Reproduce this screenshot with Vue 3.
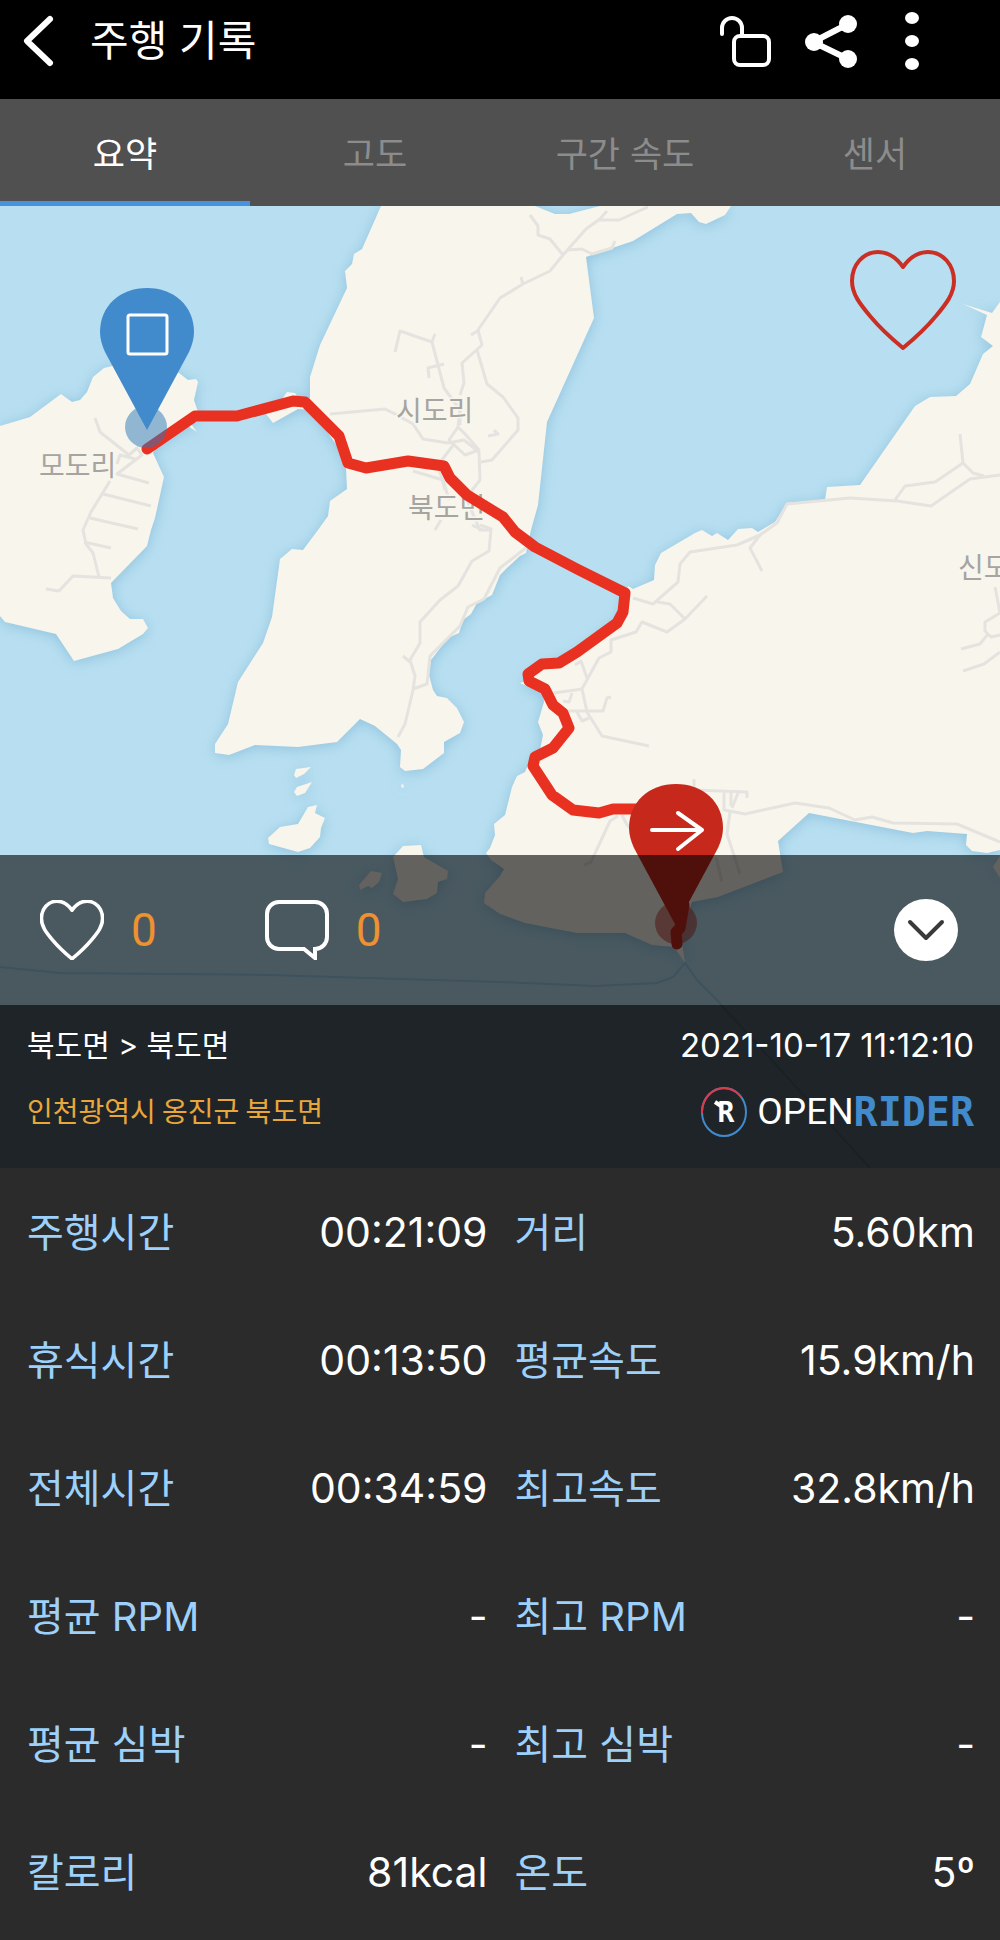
<script setup>
import { ref } from 'vue'

const tabs = ['요약', '고도', '구간 속도', '센서']
const active = ref(0)

const heart =
  'M53 17C46 7 37 2 28 2C13 2 2 15 2 31C2 44 10 54 20 66C30 78 42 89 53 98C64 89 76 78 86 66C96 54 104 44 104 31C104 15 93 2 78 2C69 2 60 7 53 17Z'

const pin =
  'M0-142C-27-142-47-124-47-98C-47-91-45-85-42-78L0 0L42-78C45-85 47-91 47-98C47-124 27-142 0-142Z'

const lands = [
  '0,426 30,417 61,394 72,402 80,400 87,392 93,377 104,368 120,364 165,364 179,373 188,380 196,379 198,382 194,400 198,412 191,424 197,432 188,426 158,444 153,453 164,477 155,518 151,530 147,546 111,583 113,598 121,611 130,619 143,619 148,628 143,634 118,649 74,661 56,634 5,622 0,616',
  '381,206 362,249 354,254 352,264 345,271 347,288 320,345 310,377 310,398 297,396 295,393 287,392 280,402 266,414 273,423 298,409 312,410 340,450 346,468 347,489 330,501 328,516 318,530 303,550 292,549 280,559 272,617 263,643 238,682 228,724 215,744 215,753 229,755 255,745 298,747 337,742 360,719 375,726 397,744 401,750 400,767 405,771 423,769 444,753 444,742 460,733 464,722 457,708 447,698 437,696 433,690 429,675 431,660 448,638 459,633 463,620 471,614 477,603 492,595 500,575 507,568 520,556 526,553 531,530 538,505 547,422 594,318 586,257 633,241 677,214 691,213 699,222 706,224 725,215 731,206 600,206 569,214 555,214 535,206',
  '1000,302 992,313 963,304 987,315 981,337 993,346 983,354 970,384 956,396 930,397 915,406 860,485 827,487 825,500 787,503 775,522 758,532 752,528 738,529 728,540 717,533 712,536 702,530 695,533 661,553 655,565 654,580 633,589 628,586 618,618 580,650 528,672 528,680 520,683 543,693 544,702 538,722 543,735 540,750 528,765 525,772 517,776 512,787 505,815 494,824 495,835 490,848 486,853 491,860 504,869 500,876 485,893 484,903 500,914 525,923 577,933 625,933 652,945 674,947 685,963 681,935 692,902 718,897 783,872 778,841 809,813 913,833 927,831 967,834 966,845 972,851 987,853 1000,850',
  '1000,856 993,867 1000,878',
  '296,769 311,767 304,774 296,778 294,775',
  '297,787 312,782 305,793 297,796 294,792',
  '308,807 317,805 315,813 325,818 321,828 320,837 310,848 298,852 269,844 268,838 280,827 298,824',
  '401,785 403,784 404,787 402,788',
  '403,846 421,845 424,857 448,871 447,879 438,882 437,893 427,899 403,902 393,894 398,879 393,857',
  '371,871 382,873 379,882 372,888 368,886 360,890 359,885'
]

const roads = [
  '95,418 100,432 129,455 137,448 142,455 117,474 149,483',
  '117,464 120,455 135,459',
  '110,481 91,512 83,530 86,544 93,553 99,577',
  '103,494 151,506',
  '90,518 138,529',
  '84,542 111,548',
  '111,578 73,576 59,591 46,589',
  '330,414 385,409 397,415 413,424 423,439 448,443 464,440 479,452 480,480 466,498 480,530 492,530',
  '460,425 460,410 444,388 432,342 400,331 395,352',
  '432,342 435,334',
  '444,364 428,368 429,378',
  '460,395 464,383 462,363 482,345 478,330 500,298 523,284 550,271 563,255 586,229 600,219 607,211',
  '471,335 479,330',
  '477,350 487,384 503,397 518,418 518,430 492,460 481,462',
  '530,215 538,226 538,235 550,239 563,255',
  '598,220 619,220 648,207',
  '568,250 582,249 592,254 612,248 615,241',
  '521,277 523,284',
  '460,410 458,427 449,440 465,455 479,450 466,435 458,427',
  '454,444 438,465 412,463',
  '413,471 443,480 449,500',
  '438,465 445,490',
  '488,436 498,434 494,430',
  '480,525 491,529 489,551 472,561 458,586 440,600 420,622 420,643 410,660 415,676 413,690 405,724 398,737',
  '403,656 410,662',
  '413,689 427,684 430,656 460,626 468,607 484,599 500,568 527,547',
  '441,520 435,530',
  '472,525 482,530',
  '633,598 653,604 678,582 680,564 690,552 737,545 760,535 777,523 787,504 850,498 897,501 931,506 970,479 1000,475',
  '895,500 905,486 935,482 963,463 973,473 984,476',
  '963,463 960,434',
  '760,535 750,548 762,571',
  '657,602 670,604 685,619 667,632 642,622 636,632 611,640 611,652 599,658 582,689 587,712 602,736 649,746',
  '707,596 685,619',
  '575,665 581,661 587,678',
  '554,693 582,689',
  '572,693 569,702 563,701',
  '565,711 603,711 607,698 611,697',
  '577,712 582,721 589,718',
  '694,779 694,790 747,792 747,798',
  '724,792 724,810 745,814 795,803 829,808 855,820 872,817 893,823 957,824 1000,842',
  '731,792 731,806',
  '738,793 732,808',
  '730,812 727,834 740,874',
  '716,857 722,882',
  '618,816 610,821 591,862 584,865',
  '622,815 627,825 633,830',
  '995,587 1000,613 985,622 985,631 991,637 1000,635',
  '988,634 980,644 961,649',
  '1000,652 984,664 963,671'
]

const stats = [
  ['주행시간', '00:21:09'],
  ['거리', '5.60km'],
  ['휴식시간', '00:13:50'],
  ['평균속도', '15.9km/h'],
  ['전체시간', '00:34:59'],
  ['최고속도', '32.8km/h'],
  ['평균 RPM', '-'],
  ['최고 RPM', '-'],
  ['평균 심박', '-'],
  ['최고 심박', '-'],
  ['칼로리', '81kcal'],
  ['온도', '5º']
]
</script>

<template>
  <main class="app">
    <header class="bar">
      <button type="button" aria-label="뒤로">
        <svg width="34" height="64" viewBox="0 0 34 64">
          <path d="M28 8L5 30L28 52" class="line" stroke-width="6" />
        </svg>
      </button>
      <h1>주행 기록</h1>
      <button type="button" aria-label="잠금 해제">
        <svg width="52" height="64" viewBox="0 0 52 64">
          <path d="M3 23V17A10 10 0 0 1 23 17V25" class="line" stroke-width="4" />
          <rect x="15" y="25" width="35" height="29" rx="6" class="line" stroke-width="4" />
        </svg>
      </button>
      <button type="button" aria-label="공유">
        <svg width="52" height="64" viewBox="0 0 52 64">
          <path d="M43 13L8 31L43 48" class="line" stroke-width="6" />
          <g fill="#fff">
            <circle cx="43" cy="13" r="9" />
            <circle cx="9" cy="31" r="9" />
            <circle cx="43" cy="48" r="9" />
          </g>
        </svg>
      </button>
      <button type="button" class="more" aria-label="더보기">
        <svg width="14" height="64" viewBox="0 0 14 64">
          <g fill="#fff">
            <ellipse cx="7" cy="7" rx="7" ry="6" />
            <ellipse cx="7" cy="30" rx="7" ry="6" />
            <ellipse cx="7" cy="53" rx="7" ry="6" />
          </g>
        </svg>
      </button>
    </header>

    <nav class="tabs">
      <button
        v-for="(t, i) in tabs"
        :key="t"
        type="button"
        :class="{ on: i === active }"
        @click="active = i"
      >{{ t }}</button>
    </nav>

    <section class="ride">
      <svg class="map" viewBox="0 206 1000 962" preserveAspectRatio="xMidYMid slice">
        <rect y="206" width="1000" height="962" fill="#b8dff1" />
        <g class="lands">
          <polygon v-for="p in lands" :key="p" :points="p" />
        </g>
        <g class="roads">
          <polyline v-for="r in roads" :key="r" :points="r" />
        </g>
        <polyline class="ferry" points="0,967 60,973 270,975 500,982 595,986 657,983 673,977 685,963 697,980 715,998 870,1168" />
        <g class="places">
          <text x="396" y="421">시도리</text>
          <text x="39" y="476">모도리</text>
          <text x="408" y="518">북도면</text>
          <text x="958" y="578">신도리</text>
        </g>
        <path
          class="route"
          d="M147 449L195 416H237L293 401L305 402L339 436L348 463L366 468L408 461L444 466L450 478L467 495L503 517L515 532L535 547L577 569L625 593L623 612L617 623L577 652L559 663L542 664L528 674L529 681L545 689L553 705L563 713L569 728L553 748L535 757L533 766L552 795L573 810L599 813L613 809H640"
        />
        <circle cx="146" cy="427" r="21" fill="#2a78b8" fill-opacity=".5" />
        <circle cx="676" cy="923" r="21" fill="#c6281c" fill-opacity=".5" />
        <path :d="pin" transform="translate(147 430)" fill="#418acb" />
        <path :d="pin" transform="translate(676 926)" fill="#c6281c" />
        <path class="route tail" d="M684 905L680 928L676 932L677 944" />
        <rect x="128" y="315" width="39" height="39" rx="2" class="line" stroke-width="3" />
        <path d="M652 830H702M678 813L702 830L678 849" class="line" stroke-width="4" />
      </svg>

      <div class="canvas">
        <button type="button" aria-label="즐겨찾기">
          <svg width="106" height="100" viewBox="0 0 106 100">
            <path :d="heart" fill="none" stroke="#cb2f24" stroke-width="4" stroke-linejoin="round" />
          </svg>
        </button>
      </div>

      <div class="social">
        <button type="button" class="count" aria-label="좋아요">
          <svg width="64" height="60" viewBox="0 0 106 100">
            <path :d="heart" class="line" stroke-width="6" />
          </svg>
          <span>0</span>
        </button>
        <button type="button" class="count" aria-label="댓글">
          <svg width="64" height="60" viewBox="0 0 64 60">
            <path d="M14 2H50A12 12 0 0 1 62 14V37A12 12 0 0 1 50 49V58L39 49H14A12 12 0 0 1 2 37V14A12 12 0 0 1 14 2Z" class="line sharp" stroke-width="4" />
          </svg>
          <span>0</span>
        </button>
        <button type="button" class="fold" aria-label="접기">
          <svg width="64" height="62" viewBox="0 0 64 62">
            <ellipse cx="32" cy="31" rx="32" ry="31" fill="#fff" />
            <path d="M16 23L32 39L48 23" fill="none" stroke="#3a3a3a" stroke-width="4" stroke-linecap="round" stroke-linejoin="round" />
          </svg>
        </button>
      </div>

      <div class="info">
        <div class="row">
          <p class="path">북도면 &gt; 북도면</p>
          <time datetime="2021-10-17T11:12:10">2021-10-17 11:12:10</time>
        </div>
        <div class="row">
          <p class="address">인천광역시 옹진군 북도면</p>
          <p class="brand">
            <svg width="46" height="50" viewBox="0 0 46 50">
              <ellipse cx="23" cy="25" rx="22" ry="24" fill="none" stroke="#418acb" stroke-width="2" />
              <path d="M1 26A22 24 0 0 1 40 10" fill="none" stroke="#d93a4c" stroke-width="2" />
              <path d="M14 15L20 19" stroke="#fff" stroke-width="4" />
              <text x="25" y="35" text-anchor="middle" class="mark">R</text>
            </svg>
            <span class="open">OPEN</span><span class="rider">RIDER</span>
          </p>
        </div>
      </div>
    </section>

    <dl class="stats">
      <div v-for="[label, value] in stats" :key="label">
        <dt>{{ label }}</dt>
        <dd>{{ value }}</dd>
      </div>
    </dl>
  </main>
</template>

<style>
body {
  background: #2b2b2b;
}
</style>

<style scoped>
.app {
  font-family: Inter, "Noto Sans CJK KR", sans-serif;
  color: #fff;
}
button {
  margin: 0;
  padding: 0;
  border: 0;
  background: none;
  color: inherit;
  font: inherit;
  cursor: pointer;
}
svg {
  display: block;
}
h1,
p,
dl,
dd {
  margin: 0;
}
.line {
  fill: none;
  stroke: #fff;
  stroke-linecap: round;
  stroke-linejoin: round;
}
.sharp {
  stroke-linejoin: miter;
}
.bar {
  display: flex;
  gap: 34px;
  padding: 11px 81px 24px 22px;
  background: #000;
}
.bar h1 {
  flex: 1;
  font-size: 42px;
  line-height: 60px;
  font-weight: 400;
}
.more {
  padding-left: 14px;
}
.tabs {
  display: grid;
  grid-template-columns: repeat(4, 1fr);
  background: #505050;
}
.tabs button {
  height: 107px;
  padding-top: 2px;
  border-bottom: 5px solid transparent;
  color: #8c8c8c;
  font-size: 35px;
}
.tabs .on {
  border-color: #4792dd;
  color: #fff;
}
.ride {
  position: relative;
}
.map {
  position: absolute;
  inset: 0;
  width: 100%;
  height: 100%;
}
.lands {
  fill: #f8f5ec;
  filter: drop-shadow(0 2px 7px rgba(50, 130, 180, 0.3));
}
.roads,
.ferry {
  fill: none;
  stroke: #e5e3df;
  stroke-width: 3;
  stroke-linejoin: round;
}
.ferry {
  stroke: #99cce9;
  stroke-width: 2;
}
.places {
  fill: #a5a4a1;
  font-size: 28px;
  stroke: #f8f5ec;
  stroke-width: 3;
  paint-order: stroke;
}
.route {
  fill: none;
  stroke: #e93122;
  stroke-width: 11;
  stroke-linecap: round;
  stroke-linejoin: round;
}
.tail {
  stroke: #c6281c;
}
.canvas,
.social,
.info {
  position: relative;
}
.canvas {
  display: flex;
  justify-content: flex-end;
  align-items: flex-start;
  min-height: 605px;
  padding: 44px 44px 0;
}
.social {
  display: flex;
  align-items: center;
  gap: 108px;
  height: 150px;
  padding: 0 42px 0 40px;
  background: rgba(0, 0, 0, 0.6);
}
.count {
  display: flex;
  align-items: center;
  gap: 27px;
  color: #ee9130;
  font: 46px/60px Roboto, sans-serif;
}
.fold {
  margin-left: auto;
}
.info {
  padding: 10px 26px 19px 27px;
  background: rgba(0, 0, 0, 0.84);
}
.row {
  display: flex;
  justify-content: space-between;
  align-items: center;
  height: 60px;
}
.row + .row {
  height: 74px;
}
.path,
.address,
.stats dt {
  padding-bottom: 4px;
}
.path {
  font-size: 30px;
}
time {
  font-size: 33px;
}
.address {
  color: #e9a73b;
  font-family: "Noto Sans CJK KR", sans-serif;
  font-size: 28px;
}
.brand {
  display: flex;
  align-items: center;
  line-height: 50px;
}
.mark {
  fill: #fff;
  font: bold 28px "DejaVu Sans Mono", monospace;
}
.open {
  margin-left: 10px;
  font-family: Roboto, sans-serif;
  font-size: 37px;
}
.rider {
  color: #418acb;
  font: bold 40px/50px "DejaVu Sans Mono", monospace;
}
.stats {
  display: grid;
  grid-template-columns: 1fr 1fr;
  column-gap: 27px;
  padding: 0 25px 4px 27px;
  background: #2b2b2b;
}
.stats div {
  display: flex;
  justify-content: space-between;
  align-items: center;
  height: 128px;
  font-size: 40px;
}
.stats dt {
  color: #9dd1fb;
}
.stats dd {
  font-size: 41px;
}
</style>
